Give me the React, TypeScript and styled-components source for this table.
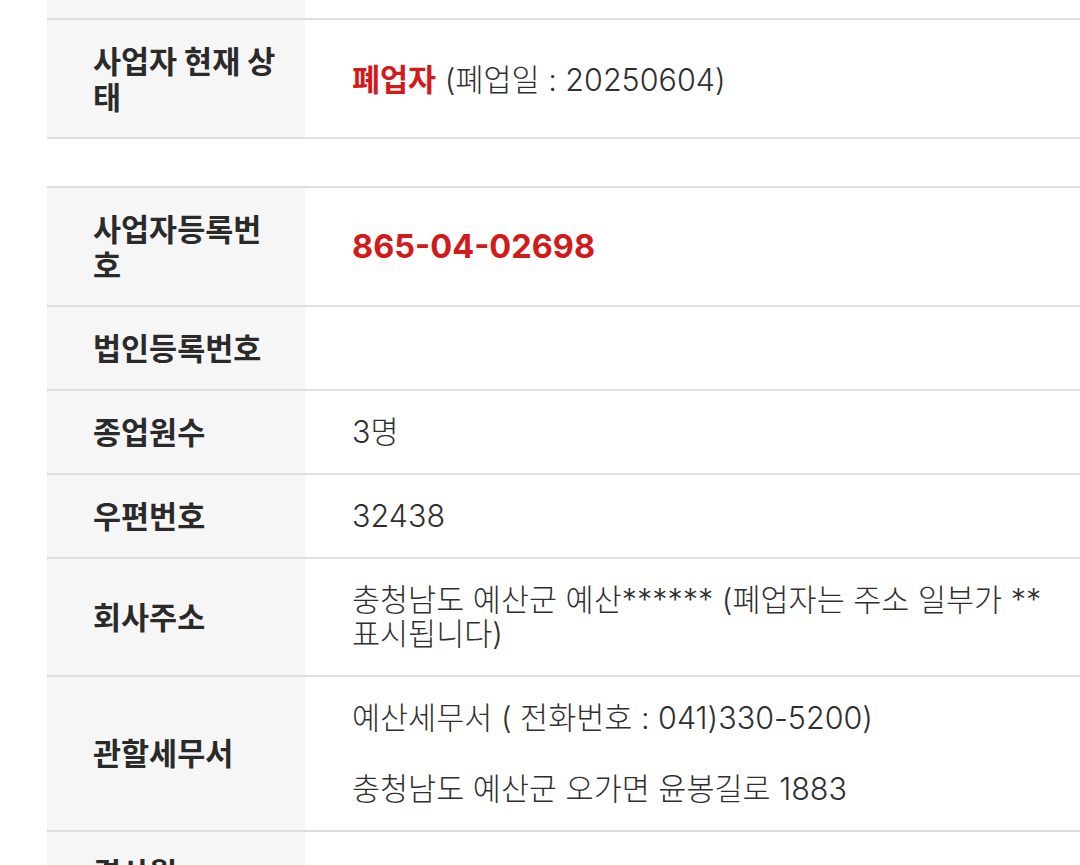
import React from "react";
import styled, { createGlobalStyle } from "styled-components";

const Global = createGlobalStyle`
  html, body {
    margin: 0;
    padding: 0;
    background: #ffffff;
    overflow: hidden;
  }
  body {
    font-family: "Inter", "Noto Sans CJK KR", sans-serif;
    -webkit-font-smoothing: antialiased;
  }
`;

const Page = styled.div`
  width: 1080px;
  height: 865px;
  overflow: hidden;
  padding-left: 47px;
  box-sizing: border-box;
  display: flex;
  flex-direction: column;
`;

const Table = styled.div<{ $gap?: boolean }>`
  display: flex;
  flex-direction: column;
  flex-shrink: 0;
  margin-top: ${(p) => (p.$gap ? "47px" : "0")};
  border-bottom: 2px solid #dedede;
`;

const Row = styled.div`
  display: grid;
  grid-template-columns: 258px 1fr;
  border-top: 2px solid #dedede;
`;

const Strip = styled.div`
  display: grid;
  grid-template-columns: 258px 1fr;
  height: 18px;
`;

const StripLabel = styled.div`
  background: #f6f6f6;
`;

const Label = styled.div`
  background: #f6f6f6;
  padding: 23px 20px 23px 46px;
  display: flex;
  align-items: center;
  font-family: "Noto Sans CJK KR", sans-serif;
  font-weight: 700;
  font-size: 30.5px;
  line-height: 35.5px;
  color: #2a2a2a;
`;

const Value = styled.div`
  padding: 24px 20px 24px 47px;
  display: flex;
  flex-direction: column;
  justify-content: center;
  gap: 37px;
  font-family: "Inter", "Noto Sans CJK KR", sans-serif;
  font-weight: 300;
  font-size: 30.5px;
  line-height: 34px;
  color: #2f2f2f;
  word-break: keep-all;
`;

const Red = styled.span<{ $big?: boolean }>`
  color: #d21a1a;
  font-weight: 700;
  font-family: ${(p) =>
    p.$big ? `"Inter", "Noto Sans CJK KR", sans-serif` : `"Noto Sans CJK KR", sans-serif`};
  font-size: ${(p) => (p.$big ? "32.5px" : "30.5px")};
`;

const Line = styled.div``;

type Item = { label: string; value: React.ReactNode[] };

const second: Item[] = [
  { label: "사업자등록번호", value: [<Red $big>865-04-02698</Red>] },
  { label: "법인등록번호", value: [""] },
  { label: "종업원수", value: ["3명"] },
  { label: "우편번호", value: ["32438"] },
  {
    label: "회사주소",
    value: ["충청남도 예산군 예산****** (폐업자는 주소 일부가 ** 표시됩니다)"],
  },
  {
    label: "관할세무서",
    value: ["예산세무서 ( 전화번호 : 041)330-5200)", "충청남도 예산군 오가면 윤봉길로 1883"],
  },
  { label: "결산월", value: [""] },
];

export default function App() {
  return (
    <>
      <Global />
      <Page>
        <Table>
          <Strip>
            <StripLabel />
            <div />
          </Strip>
          <Row>
            <Label>사업자 현재 상태</Label>
            <Value>
              <Line>
                <Red>폐업자</Red> (폐업일 : 20250604)
              </Line>
            </Value>
          </Row>
        </Table>
        <Table $gap>
          {second.map((it) => (
            <Row key={it.label}>
              <Label>{it.label}</Label>
              <Value>
                {it.value.map((v, i) => (
                  <Line key={i}>{v}</Line>
                ))}
              </Value>
            </Row>
          ))}
        </Table>
      </Page>
    </>
  );
}
